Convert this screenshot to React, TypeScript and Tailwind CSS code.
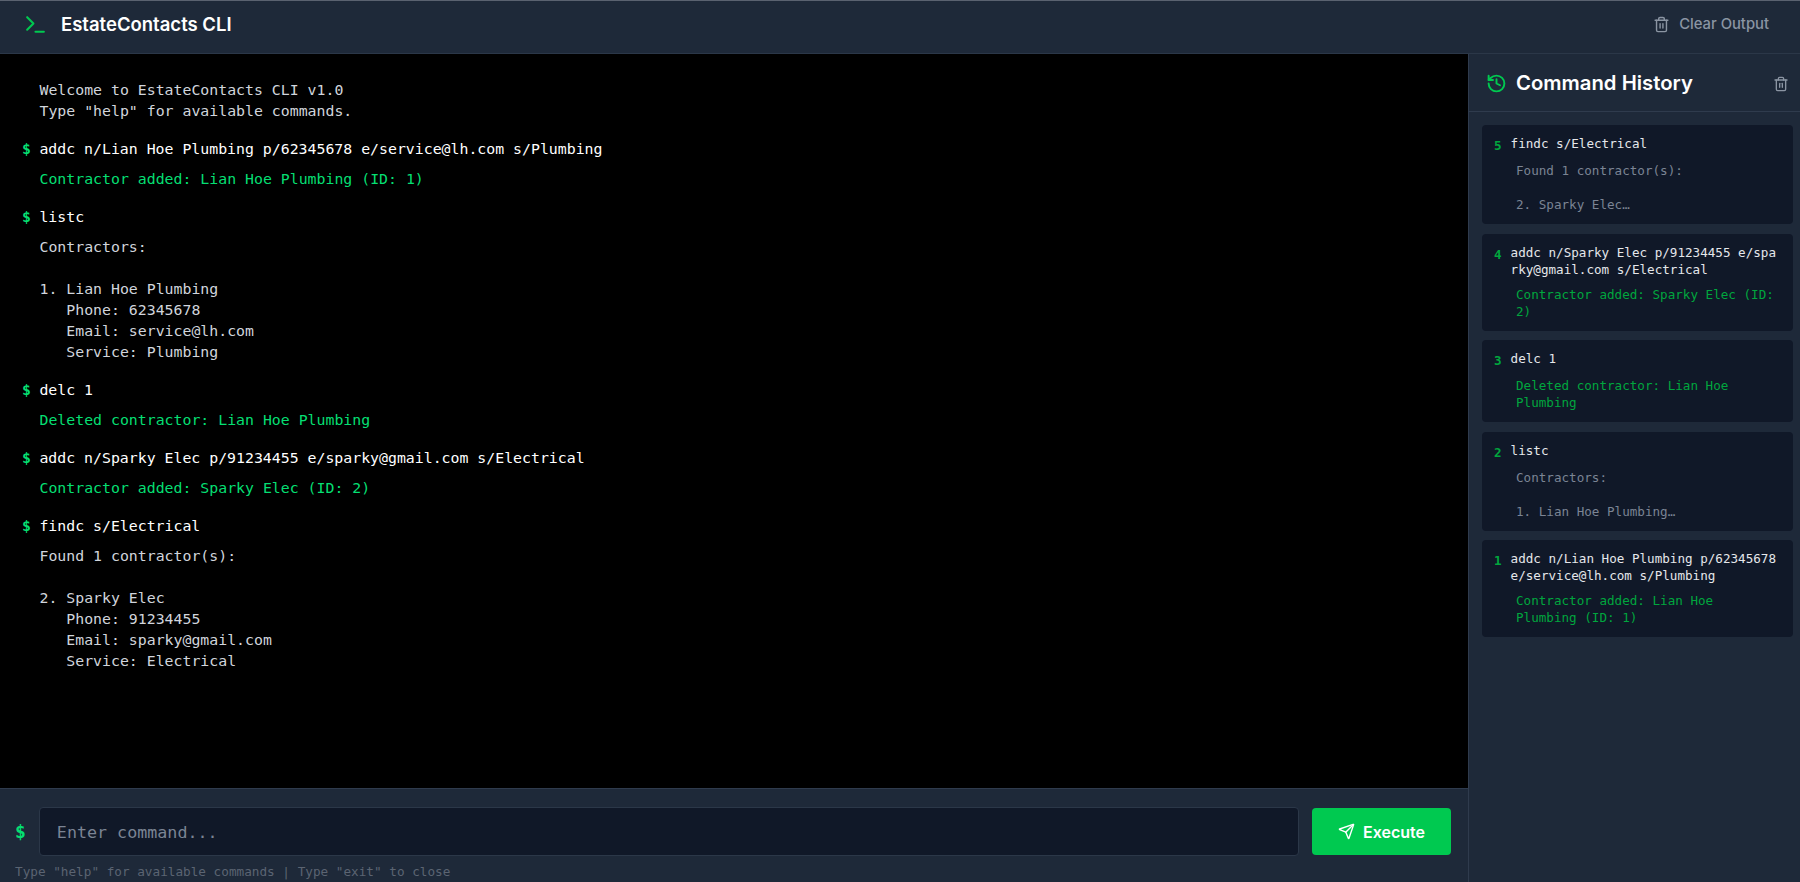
import React from 'react';
import { History, Send, Terminal, Trash2 } from 'lucide-react';

const mono = 'font-["DejaVu_Sans_Mono",monospace]';
const sans = 'font-["Inter",sans-serif]';

type Entry = { cmd: string; out: string; ok?: boolean };

const terminalEntries: Entry[] = [
  { cmd: 'addc n/Lian Hoe Plumbing p/62345678 e/service@lh.com s/Plumbing', out: 'Contractor added: Lian Hoe Plumbing (ID: 1)', ok: true },
  { cmd: 'listc', out: 'Contractors:\n\n1. Lian Hoe Plumbing\n   Phone: 62345678\n   Email: service@lh.com\n   Service: Plumbing' },
  { cmd: 'delc 1', out: 'Deleted contractor: Lian Hoe Plumbing', ok: true },
  { cmd: 'addc n/Sparky Elec p/91234455 e/sparky@gmail.com s/Electrical', out: 'Contractor added: Sparky Elec (ID: 2)', ok: true },
  { cmd: 'findc s/Electrical', out: 'Found 1 contractor(s):\n\n2. Sparky Elec\n   Phone: 91234455\n   Email: sparky@gmail.com\n   Service: Electrical' },
];

const historyEntries: (Entry & { n: number })[] = [
  { n: 5, cmd: 'findc s/Electrical', out: 'Found 1 contractor(s):\n\n2. Sparky Elec…' },
  { n: 4, cmd: 'addc n/Sparky Elec p/91234455 e/sparky@gmail.com s/Electrical', out: 'Contractor added: Sparky Elec (ID: 2)', ok: true },
  { n: 3, cmd: 'delc 1', out: 'Deleted contractor: Lian Hoe Plumbing', ok: true },
  { n: 2, cmd: 'listc', out: 'Contractors:\n\n1. Lian Hoe Plumbing…' },
  { n: 1, cmd: 'addc n/Lian Hoe Plumbing p/62345678 e/service@lh.com s/Plumbing', out: 'Contractor added: Lian Hoe Plumbing (ID: 1)', ok: true },
];

function Header() {
  return (
    <header className="h-[54px] shrink-0 flex items-center justify-between bg-[#1e2939] border-t border-t-[#5a6270] border-b border-b-[#2b3748] pl-[23px] pr-[31px] pb-[6px]">
      <div className="flex items-center gap-[13px]">
        <Terminal size={25} strokeWidth={2} className="text-[#00c950]" />
        <h1 className={`${sans} text-[18.5px] font-semibold text-white leading-none`}>EstateContacts CLI</h1>
      </div>
      <button className={`${sans} flex items-center gap-[9px] text-[14.8px] font-medium text-[#8b95a3]`}>
        <Trash2 size={17} />
        Clear Output
      </button>
    </header>
  );
}

function TerminalOutput() {
  return (
    <div className={`${mono} flex-1 bg-black pl-[22px] pt-[26px] text-[14.85px] leading-[21px] overflow-hidden`}>
      <div className="pl-[17.5px] text-[#d1d5dc] whitespace-pre mb-[17px]">
        {'Welcome to EstateContacts CLI v1.0\nType "help" for available commands.'}
      </div>
      {terminalEntries.map((e) => (
        <div key={e.cmd} className="mb-[17px]">
          <div className="flex gap-[8.5px] text-white">
            <span className="text-[#05df72] font-bold">$</span>
            <span>{e.cmd}</span>
          </div>
          <div className={`mt-[9px] pl-[17.5px] whitespace-pre ${e.ok ? 'text-[#05df72]' : 'text-[#d1d5dc]'}`}>{e.out}</div>
        </div>
      ))}
    </div>
  );
}

function InputBar() {
  return (
    <div className="h-[94px] shrink-0 bg-[#1e2939] border-t border-[#2f3b4d] pl-[15px] pr-[17px] pt-[18px]">
      <div className="flex items-center gap-[13px]">
        <span className={`${mono} text-[#05df72] text-[18px] font-bold`}>$</span>
        <input
          placeholder="Enter command..."
          readOnly
          className={`${mono} flex-1 h-[49px] rounded bg-[#101828] border border-[#2b3748] px-[17px] text-[16.7px] text-white placeholder:text-[#7b8494] outline-none`}
        />
        <button className={`${sans} w-[139px] h-[47px] rounded flex items-center justify-center gap-[8px] bg-[#00c950] text-white text-[16px] font-semibold`}>
          <Send size={17} />
          Execute
        </button>
      </div>
      <p className={`${mono} mt-[7px] text-[12.7px] leading-[17px] text-[#5b6472]`}>
        Type "help" for available commands | Type "exit" to close
      </p>
    </div>
  );
}

function HistoryPanel() {
  return (
    <aside className="w-[332px] shrink-0 bg-[#1e2939] border-l border-[#2f3b4d] flex flex-col">
      <div className="h-[58px] shrink-0 flex items-center justify-between border-b border-[#2f3b4d] pl-[17px] pr-[11px] pt-[2px]">
        <div className="flex items-center gap-[9px]">
          <History size={21} strokeWidth={2.2} className="text-[#00c950]" />
          <h2 className={`${sans} text-[20.3px] font-semibold text-white leading-none`}>Command History</h2>
        </div>
        <Trash2 size={16} className="text-[#8b95a3]" />
      </div>
      <div className="pt-[13px] pl-[13px] pr-[7px] flex flex-col gap-[9.5px]">
        {historyEntries.map((h) => (
          <div key={h.n} className={`${mono} rounded bg-[#101828] pl-[12px] pr-[13px] pt-[10px] pb-[11px] text-[12.6px] leading-[17px]`}>
            <div className="flex gap-[9px]">
              <span className="text-[#00a63e] font-bold mt-[2px]">{h.n}</span>
              <span className="flex-1 min-w-0 break-all text-[#e5e7eb]">{h.cmd}</span>
            </div>
            <div className={`mt-[8px] ml-[22px] whitespace-pre-wrap ${h.ok ? 'text-[#00a63e]' : 'text-[#7b8494]'}`}>{h.out}</div>
          </div>
        ))}
      </div>
    </aside>
  );
}

export default function App() {
  return (
    <div className="h-screen w-full flex flex-col overflow-hidden bg-[#1e2939]">
      <Header />
      <div className="flex-1 min-h-0 flex">
        <main className="flex-1 min-w-0 flex flex-col">
          <TerminalOutput />
          <InputBar />
        </main>
        <HistoryPanel />
      </div>
    </div>
  );
}
